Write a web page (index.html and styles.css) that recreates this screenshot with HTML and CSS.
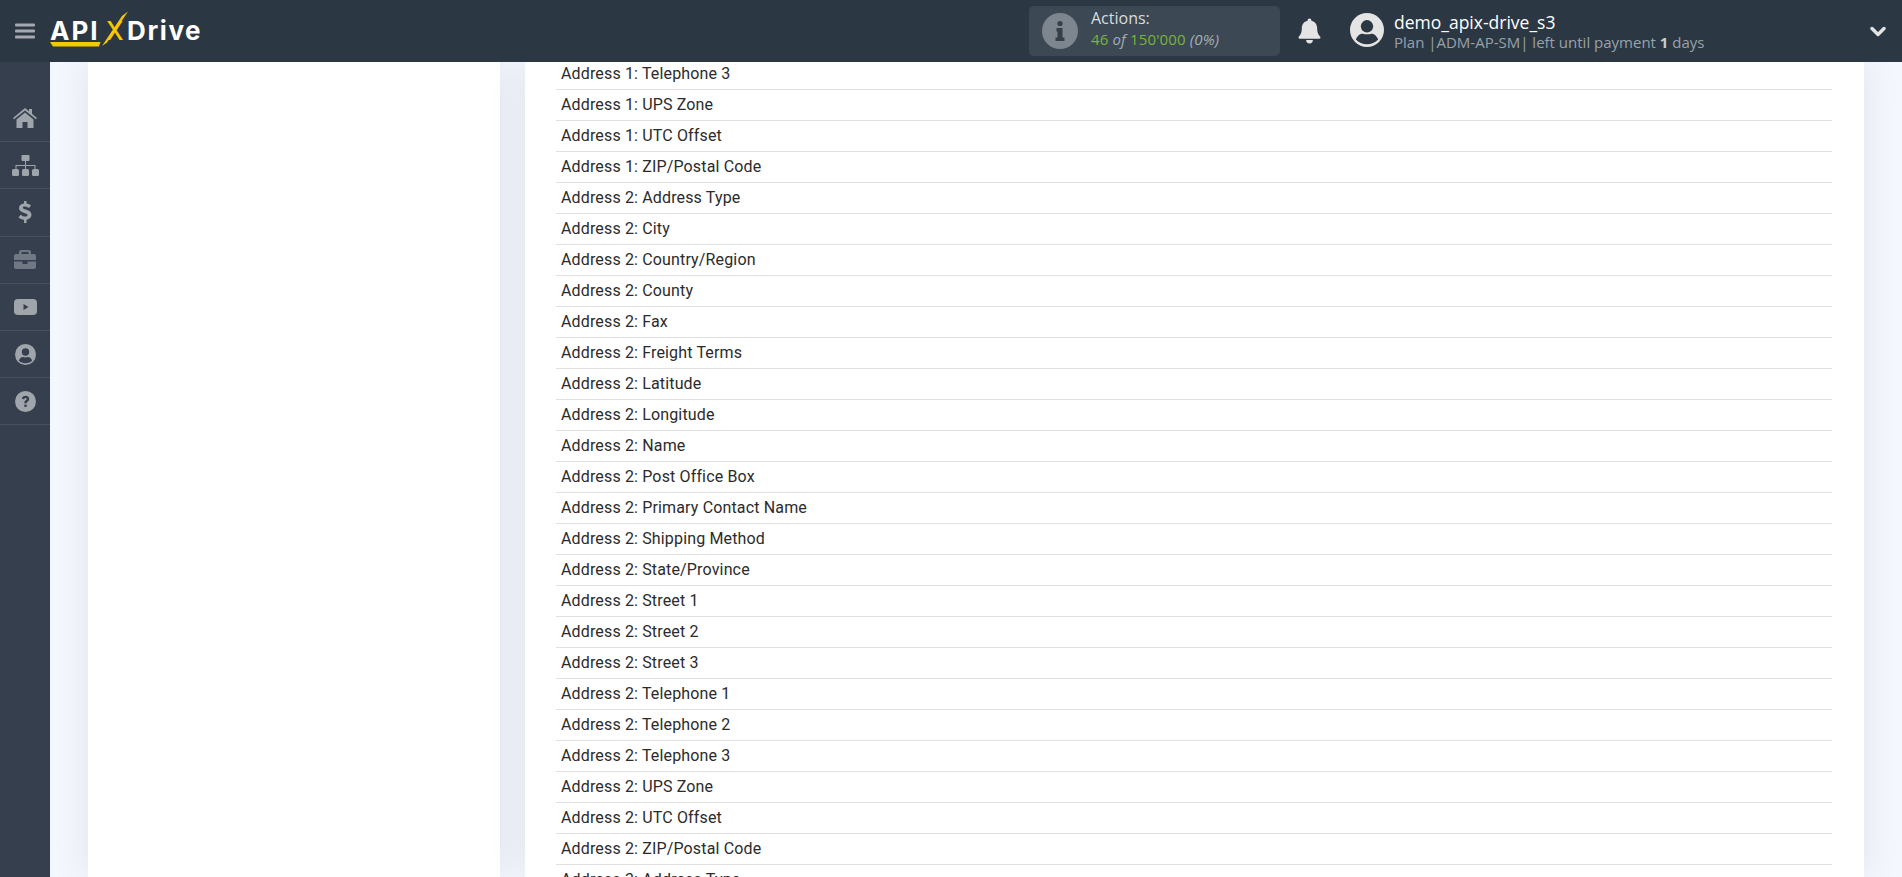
FILE: index.html
```html
<!DOCTYPE html>
<html lang="en">
<head>
<meta charset="utf-8">
<title>ApiX-Drive</title>
<link rel="stylesheet" href="styles.css">
</head>
<body>
<header class="topbar">
  <div class="brand">
    <svg class="burger" viewBox="0 0 20 16" width="20" height="16"><rect y="0.5" width="20" height="3" rx="1"/><rect y="6.500" width="20" height="3" rx="1"/><rect y="12.500" width="20" height="3" rx="1"/></svg>
    <div class="logo">
      <span class="logo-api">API</span><span class="logo-x">X</span><span class="logo-drive">Drive</span>
      <svg class="logo-marks" viewBox="0 0 160 46" width="160" height="46"><path d="M0 31h50.500l-1.500 4.500H3z" fill="#f5c800"/><path d="M52 35L72 5l6-4.500L57 31.500z" fill="#f5c800"/></svg>
    </div>
  </div>
  <div class="actions">
    <svg class="info" viewBox="0 0 36 36" width="36" height="36"><circle cx="18" cy="18" r="18" fill="#7d858e"/><circle cx="18" cy="10.500" r="2.600" fill="#353f4a"/><path d="M14.500 15h6v9.500h2V28h-9v-3.500h2V18.500h-1z" fill="#353f4a"/></svg>
    <div class="actions-text">
      <div class="actions-title">Actions:</div>
      <div class="actions-count"><span class="green">46</span> <i>of</i> <span class="green">150'000</span> <i>(0%)</i></div>
    </div>
  </div>
  <svg class="bell" viewBox="0 0 24 26" width="23" height="26"><path d="M12 0a2 2 0 0 1 2 2.200c4 .8 6 4 6 8 0 5 1.500 7 3.200 8.800.5.600.3 2-1 2H1.800c-1.300 0-1.500-1.400-1-2C2.500 17.200 4 15.200 4 10.200c0-4 2-7.200 6-8A2 2 0 0 1 12 0z" fill="#e4e4e4"/><path d="M8.500 22.500h7a3.500 3.500 0 0 1-7 0z" fill="#e4e4e4"/></svg>
  <div class="user">
    <svg class="avatar" viewBox="0 0 32 32" width="34" height="34"><circle cx="16" cy="16" r="16" fill="#e4e4e4"/><circle cx="16" cy="12.500" r="5.800" fill="#2c3744"/><path d="M5.500 25c1.500-4 4-5.500 6.500-5.500 2.500.8 5.500.8 8 0 2.500 0 5 1.500 6.500 5.500-2.500 3-6.500 4.500-10.500 4.500S8 28 5.500 25z" fill="#2c3744"/></svg>
    <div class="user-text">
      <div class="user-name">demo_apix-drive_s3</div>
      <div class="user-plan">Plan |ADM-AP-SM| left until payment <b>1</b> days</div>
    </div>
  </div>
  <svg class="chevron" viewBox="0 0 16 11" width="16" height="11"><path d="M2 2.500l6 6 6-6" fill="none" stroke="#e4e4e4" stroke-width="3.400" stroke-linecap="round" stroke-linejoin="round"/></svg>
</header>
<div class="body">
  <nav class="sidebar">
    <a class="nav-item"><svg viewBox="0 0 24 20" width="24" height="20"><path d="M12 0l4 3.300V1h3v4.800l5 4.200-1 1.300L12 2.500 1 11.300 0 10z"/><path d="M12 4.500l8.500 7V20H14.500v-6h-5v6H3.500v-8.500z"/></svg></a>
    <a class="nav-item"><svg viewBox="0 0 27 21" width="27" height="21"><rect x="9.500" width="8" height="6" rx="1"/><path d="M13 6h1v4h9.500v4h-1v-3H14v3h-1v-3H4.500v3h-1v-4H13z"/><rect y="14" width="7" height="7" rx="1.500"/><rect x="10" y="14" width="7" height="7" rx="1.500"/><rect x="20" y="14" width="7" height="7" rx="1.500"/></svg></a>
    <a class="nav-item"><svg viewBox="0 0 14 22" width="14" height="22"><path d="M6 0h2.500v2.600c1.900.2 3.400 1 4.500 2L11 7c-1.300-1-2.600-1.500-4-1.500-1.500 0-2.200.5-2.200 1.300 0 2.300 8.700 1.300 8.700 7 0 2.600-1.800 4.400-5 4.900V22H6v-3.300c-2.200-.2-4.200-1.200-5.500-2.500l2.200-2.500c1.400 1.200 3 1.900 4.400 1.900 1.700 0 2.500-.6 2.500-1.500C9.600 11.300 1 12.400 1 6.900 1 4.500 2.800 3 6 2.600z"/></svg></a>
    <a class="nav-item dim"><svg viewBox="0 0 22 19" width="22" height="19"><path d="M7 0h8a2 2 0 0 1 2 2v2h3a2 2 0 0 1 2 2v4H0V6a2 2 0 0 1 2-2h3V2a2 2 0 0 1 2-2zm.500 2v2h7V2z" fill-rule="evenodd"/><path d="M0 11.500h8.500V14h5v-2.500H22V17a2 2 0 0 1-2 2H2a2 2 0 0 1-2-2z"/></svg></a>
    <a class="nav-item"><svg viewBox="0 0 23 16" width="23" height="16"><path d="M4 0h15a4 4 0 0 1 4 4v8a4 4 0 0 1-4 4H4a4 4 0 0 1-4-4V4a4 4 0 0 1 4-4zm5.500 5v6l5-3z" fill-rule="evenodd"/></svg></a>
    <a class="nav-item"><svg viewBox="0 0 21 21" width="21" height="21"><circle cx="10.500" cy="10.500" r="10.500"/><circle cx="10.500" cy="8" r="3.700" fill="#353f4e"/><path d="M3.800 16.500c1-2.500 2.700-3.500 4.300-3.500 1.600.5 3.200.5 4.800 0 1.600 0 3.300 1 4.300 3.500-1.600 1.800-4 2.800-6.700 2.800s-5.100-1-6.700-2.800z" fill="#353f4e"/></svg></a>
    <a class="nav-item"><svg viewBox="0 0 21 21" width="21" height="21"><circle cx="10.500" cy="10.500" r="10.500"/><path d="M7 8c0-2 1.500-3.200 3.600-3.200S14.200 6 14.200 8c0 2.500-2.500 2.500-2.500 4.300H9.300c0-3 2.400-3 2.400-4.200 0-.7-.5-1.100-1.100-1.100s-1.200.4-1.300 1.300z" fill="#353f4e"/><rect x="9.200" y="13.500" width="2.600" height="2.600" rx="1" fill="#353f4e"/></svg></a>
  </nav>
  <main class="content">
    <section class="card card-left"></section>
    <section class="card card-right">
      <ul class="fields">
        <li>Address 1: Telephone 3</li>
        <li>Address 1: UPS Zone</li>
        <li>Address 1: UTC Offset</li>
        <li>Address 1: ZIP/Postal Code</li>
        <li>Address 2: Address Type</li>
        <li>Address 2: City</li>
        <li>Address 2: Country/Region</li>
        <li>Address 2: County</li>
        <li>Address 2: Fax</li>
        <li>Address 2: Freight Terms</li>
        <li>Address 2: Latitude</li>
        <li>Address 2: Longitude</li>
        <li>Address 2: Name</li>
        <li>Address 2: Post Office Box</li>
        <li>Address 2: Primary Contact Name</li>
        <li>Address 2: Shipping Method</li>
        <li>Address 2: State/Province</li>
        <li>Address 2: Street 1</li>
        <li>Address 2: Street 2</li>
        <li>Address 2: Street 3</li>
        <li>Address 2: Telephone 1</li>
        <li>Address 2: Telephone 2</li>
        <li>Address 2: Telephone 3</li>
        <li>Address 2: UPS Zone</li>
        <li>Address 2: UTC Offset</li>
        <li>Address 2: ZIP/Postal Code</li>
        <li>Address 3: Address Type</li>
      </ul>
    </section>
  </main>
</div>
</body>
</html>
```
FILE: styles.css
```css
* { box-sizing: border-box; }
html, body { margin: 0; height: 100%; overflow: hidden; }
body { font-family: Roboto, sans-serif; background: #f4f7fd; display: flex; flex-direction: column; height: 877px; }

.topbar { height: 62px; flex: none; background: #2c3744; display: flex; align-items: center; position: relative; z-index: 1; }
.brand { display: flex; align-items: center; width: 1029px; flex: none; padding-left: 15px; }
.burger { fill: #a5a9af; margin-right: 15px; }
.logo { position: relative; font-family: Inter, sans-serif; font-weight: 700; font-size: 26px; color: #fff; display: flex; width: 160px; height: 46px; align-items: center; margin-top: -1px; }
.logo-api { letter-spacing: 2px; width: 54px; }
.logo-x { color: #f5c800; width: 23px; padding-left: 2px; font-weight: 500; font-size: 25px; }
.logo-drive { letter-spacing: 1.6px; }
.logo-marks { position: absolute; left: 0; top: 3px; }

.actions { width: 251px; height: 50px; flex: none; background: #3c4954; border-radius: 5px; display: flex; align-items: center; padding-left: 13px; }
.info { margin-right: 13px; }
.actions-text { margin-top: -5px; }
.actions-title { font-family: "Open Sans", sans-serif; font-size: 16px; line-height: 21px; color: #d8dcdf; }
.actions-count { font-family: "Open Sans", sans-serif; font-size: 15px; line-height: 20px; letter-spacing: 0.15px; color: #a5adb3; }
.green { color: #7ab23e; }

.bell { margin-left: 18px; flex: none; }
.user { display: flex; align-items: center; margin-left: 29px; flex: 1; }
.avatar { margin-right: 10px; flex: none; margin-top: -2px; }
.user-name { font-family: "Open Sans", sans-serif; font-size: 17.5px; line-height: 22px; color: #fff; }
.user-plan { font-family: "Open Sans", sans-serif; font-size: 15px; line-height: 19px; color: #98a2a9; }
.user-plan b { color: #c8cdd1; }
.chevron { margin-right: 16px; flex: none; }

.body { flex: 1; display: flex; min-height: 0; }
.sidebar { width: 50px; flex: none; background: #353f4e; padding-top: 33px; }
.nav-item { height: 47.2px; display: flex; align-items: center; justify-content: center; border-bottom: 1px solid #46505e; fill: #a0a5ab; }
.nav-item.dim { fill: #6f7883; }

.content { flex: 1; min-width: 0; display: flex; padding: 0 38px 0 38px; gap: 25px; }
.card { background: #fff; overflow: hidden; box-shadow: 0 0 36px rgba(0, 0, 0, 0.09); }
.card-left { width: 412px; flex: none; }
.card-right { flex: 1; padding: 0 32px 0 31px; }
.fields { list-style: none; margin: -3px 0 0; padding: 0; }
.fields li { height: 31px; border-bottom: 1px solid #e0e0e0; padding: 4px 0 0 5px; font-size: 16px; line-height: 22px; letter-spacing: 0.15px; color: #2b2b2b; }
```
